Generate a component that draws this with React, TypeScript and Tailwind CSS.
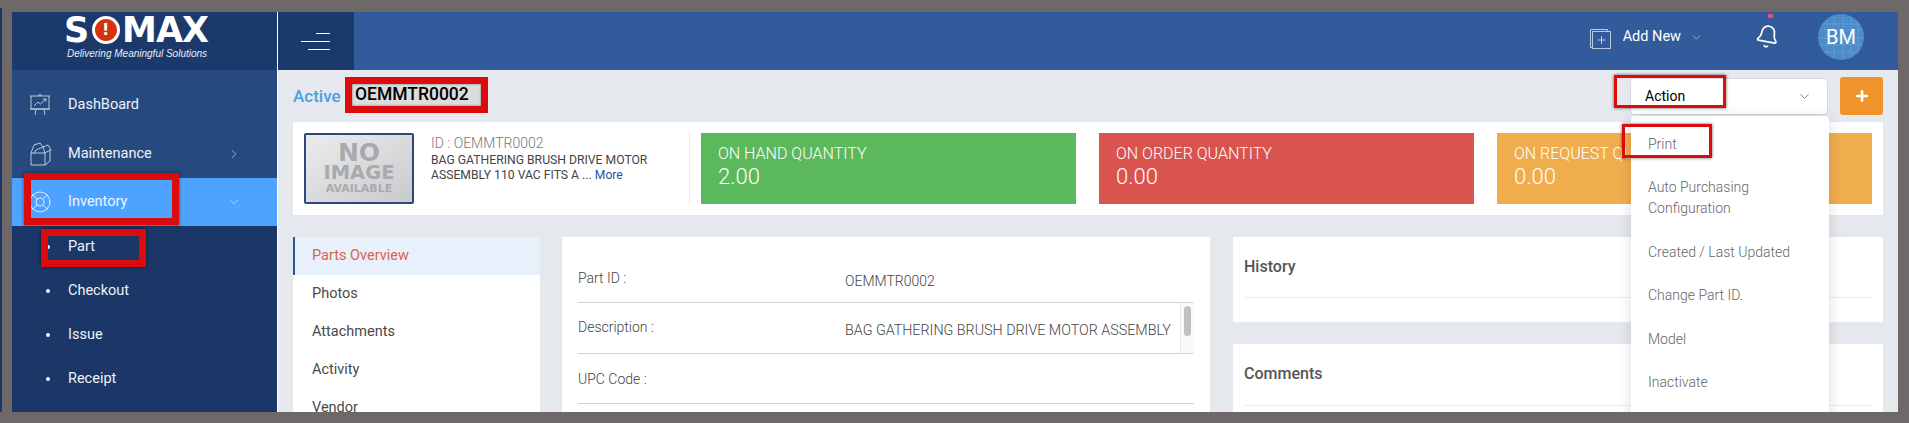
import { Bell, ChevronDown, ChevronRight, LifeBuoy, Plus } from "lucide-react";

const ROBOTO = "font-['Roboto',sans-serif]";

const TABS = ["Parts Overview", "Photos", "Attachments", "Activity", "Vendor"];
const SUB_ITEMS = ["Part", "Checkout", "Issue", "Receipt"];
const MENU = [
  "Print",
  "Auto Purchasing Configuration",
  "Created / Last Updated",
  "Change Part ID.",
  "Model",
  "Inactivate",
];

function Logo() {
  return (
    <div className="h-[58px] bg-[#1b3a6b] pl-[52px] pt-[3px] text-white">
      <div className="flex h-[30px] w-[144px] items-center justify-between font-['DejaVu_Sans',sans-serif] text-[35px] font-bold leading-none">
        <span>S</span>
        <span className="flex h-[28px] w-[28px] shrink-0 items-center justify-center rounded-full border-[3px] border-white bg-[#d5320f] text-[16px]">
          !
        </span>
        <span className="tracking-[-1px]">MAX</span>
      </div>
      <div className="mt-[2px] pl-[3px] font-['Liberation_Sans',sans-serif] text-[10px] italic leading-[14px] text-[#e8edf5]">
        Delivering Meaningful Solutions
      </div>
    </div>
  );
}

function DashboardIcon() {
  return (
    <svg width="24" height="24" viewBox="0 0 24 24" fill="none" stroke="#c9d6e6" strokeWidth="0.9">
      <path d="M2 3H22M3 3V16H21V3M2 16H22" />
      <path d="M6 13L10 9L12.500 11L18 6M15 6H18V8.500" />
      <path d="M8 16L7 22M16 16L17 22M11 1V3M13 1V3" />
    </svg>
  );
}

function BoxIcon() {
  return (
    <svg width="24" height="24" viewBox="0 0 24 24" fill="none" stroke="#c9d6e6" strokeWidth="0.9">
      <path d="M3 11V23H17V11H3ZM17 11L22 8V19L17 23" />
      <path d="M3 11L6 3L12 1L15 5L8 8L6 11M15 5L20 3L23 8L22 8M15 5L17 11" />
    </svg>
  );
}

function Sidebar() {
  return (
    <div className={`flex w-[266px] shrink-0 flex-col border-r border-white bg-[#1a3767] ${ROBOTO}`}>
      <Logo />
      <div className="h-[108px] bg-[#264a7e] pt-[10px] text-[14.500px] text-[#edf2f8]">
        <div className="flex h-[49px] items-center pl-[16px]">
          <DashboardIcon />
          <span className="ml-[16px]">DashBoard</span>
        </div>
        <div className="flex h-[49px] items-center pl-[16px] pr-[36px]">
          <BoxIcon />
          <span className="ml-[16px] flex-1">Maintenance</span>
          <ChevronRight size={14} strokeWidth={1.2} className="text-[#c9d6e6]" />
        </div>
      </div>
      <div className="flex h-[48px] items-center bg-[#4da3ff] pl-[16px] pr-[36px] text-[14.500px] text-[#edf5ff]">
        <LifeBuoy size={24} strokeWidth={1} className="text-[#d8e9ff]" />
        <span className="ml-[16px] flex-1">Inventory</span>
        <ChevronDown size={14} strokeWidth={1.2} className="text-[#d8e9ff]" />
      </div>
      <div className="-mt-[1px] text-[14.500px] text-[#edf2f8]">
        {SUB_ITEMS.map((item) => (
          <div key={item} className="flex h-[44px] items-center pl-[34px]">
            <span className="h-[4px] w-[4px] rounded-full bg-white" />
            <span className="ml-[18px]">{item}</span>
          </div>
        ))}
      </div>
    </div>
  );
}

function Avatar() {
  return (
    <div className="relative flex h-[46px] w-[46px] items-center justify-center overflow-hidden rounded-full bg-[#4b8bca] text-[20px] text-white">
      <svg className="absolute inset-0" width="46" height="46" viewBox="0 0 46 46">
        <path
          d="M2 10H44M0 16H46M0 24H46M0 31H46M3 38H43M9 3V43M16 0V46M25 0V46M33 0V46M40 4V42"
          stroke="#7fb0e0"
          strokeWidth="0.6"
          strokeDasharray="2 1"
          fill="none"
        />
      </svg>
      <span className="relative">BM</span>
    </div>
  );
}

function Header() {
  return (
    <div className="flex h-[58px] shrink-0 bg-[#315b9b] text-white">
      <div className="flex w-[76px] flex-col items-end justify-center gap-[7px] bg-[#1b3a6b] pr-[24px]">
        <span className="h-px w-[14px] bg-white" />
        <span className="h-px w-[29px] bg-white" />
        <span className="h-px w-[22px] bg-white" />
      </div>
      <div className="flex flex-1 items-center justify-end pb-[8px] pr-[34px]">
        <svg width="22" height="21" viewBox="0 0 22 21" fill="none" stroke="#b9cae2" strokeWidth="1" className="mt-[2px]">
          <path d="M3 19.5H1.5V1.5H18.5V3" />
          <rect x="3.5" y="3.5" width="18" height="17" />
          <path d="M12.5 8V16M8.500 12H16.500" />
        </svg>
        <span className="ml-[12px] text-[14.500px] leading-none">Add New</span>
        <ChevronDown size={13} strokeWidth={1.2} className="ml-[9px] text-[#d3dded]" />
        <div className="relative ml-[54px] mr-[39px] h-[46px] w-[22px]">
          <span className="absolute left-[11px] top-[0px] h-[4px] w-[5px] rounded-[1px] bg-[#ef4f6e]" />
          <Bell size={25} strokeWidth={1.6} className="absolute left-[-2px] top-[10px] rotate-[10deg]" />
        </div>
        <Avatar />
      </div>
    </div>
  );
}

function StatCard({ label, value, color }: { label: string; value: string; color: string }) {
  return (
    <div className={`h-[71px] w-[375px] pl-[17px] pt-[11px] font-light text-white ${color}`}>
      <div className="text-[16px] leading-[20px]">{label}</div>
      <div className="text-[22px] leading-[26px]">{value}</div>
    </div>
  );
}

function SummaryCard() {
  return (
    <div className="flex h-[93px] items-center bg-white pl-[11px]">
      <div className="flex h-[71px] w-[110px] shrink-0 flex-col items-center justify-center rounded-[2px] border-2 border-[#2b4a7a] bg-gradient-to-br from-[#ececee] to-[#c9cacc] font-['DejaVu_Sans',sans-serif] font-bold leading-none text-[#a9aaad]">
        <span className="text-[25px] leading-[21px]">NO</span>
        <span className="text-[19.500px] leading-[19px]">IMAGE</span>
        <span className="text-[11px] leading-[13px]">AVAILABLE</span>
      </div>
      <div className="ml-[17px] w-[258px] shrink-0 self-start pt-[13px]">
        <div className="text-[14px] font-light leading-[16px] text-[#777]">ID : OEMMTR0002</div>
        <div className="mt-[2px] text-[12.200px] leading-[15px] text-[#444]">
          BAG GATHERING BRUSH DRIVE MOTOR ASSEMBLY 110 VAC FITS A ...{" "}
          <span className="text-[#2b5597]">More</span>
        </div>
      </div>
      <div className="h-[71px] w-px shrink-0 bg-[#eceef0]" />
      <div className="ml-[11px] flex gap-[23px]">
        <StatCard label="ON HAND QUANTITY" value="2.00" color="bg-[#5cb85c]" />
        <StatCard label="ON ORDER QUANTITY" value="0.00" color="bg-[#d9534f]" />
        <StatCard label="ON REQUEST QUANTITY" value="0.00" color="bg-[#f0ad4e]" />
      </div>
    </div>
  );
}

function Tabs() {
  return (
    <div className="h-[175px] w-[247px] shrink-0 overflow-hidden bg-white text-[14.500px] text-[#4a4a4a]">
      {TABS.map((tab, i) => (
        <div
          key={tab}
          className={
            i === 0
              ? "flex h-[38px] items-center border-l-2 border-[#2b5597] bg-[#e8f0fb] pl-[17px] text-[#d9644f]"
              : "flex h-[38px] items-center pl-[19px]"
          }
        >
          {tab}
        </div>
      ))}
    </div>
  );
}

function PartDetails() {
  return (
    <div className="h-[190px] w-[648px] shrink-0 bg-white px-[16px] pt-[23px] text-[14px] font-light text-[#444]">
      <div className="flex h-[43px] border-b border-[#d4d4d4]">
        <span className="w-[267px] pt-[8px]">Part ID :</span>
        <span className="pt-[11px]">OEMMTR0002</span>
      </div>
      <div className="flex h-[51px] border-b border-[#d4d4d4]">
        <span className="w-[267px] pt-[14px]">Description :</span>
        <span className="flex-1 whitespace-nowrap pt-[17px] text-[14.300px]">BAG GATHERING BRUSH DRIVE MOTOR ASSEMBLY</span>
        <div className="w-[14px] border-l border-[#e8e8e8] bg-[#fafafa] pl-[3px] pt-[3px]">
          <div className="h-[30px] w-[7px] rounded-[4px] bg-[#c1c1c1]" />
        </div>
      </div>
      <div className="h-[50px] border-b border-[#d4d4d4] pt-[15px]">UPC Code :</div>
    </div>
  );
}

function SideCard({ title, height, lineTop }: { title: string; height: string; lineTop: string }) {
  return (
    <div className={`bg-white px-[11px] ${height}`}>
      <div className={`border-b border-[#ececec] text-[16px] font-medium text-[#555] ${lineTop}`}>{title}</div>
    </div>
  );
}

function ActionMenu() {
  return (
    <div className="absolute left-[1353px] top-[46px] h-[330px] w-[198px] rounded-t-[4px] bg-white pl-[17px] pt-[18px] text-[14px] font-light text-[#666] shadow-[0_2px_14px_rgba(0,0,0,0.14)]">
      {MENU.map((item) => (
        <div key={item} className="mb-[22.400px] w-[150px] leading-[21px] last:mb-0">
          {item}
        </div>
      ))}
    </div>
  );
}

function Content() {
  return (
    <div className="relative flex-1 overflow-hidden bg-[#e5e8ec] px-[15px]">
      <div className="flex h-[52px] items-center">
        <span className="text-[17px] font-medium leading-none text-[#4a9fe0]">Active</span>
        <div className="ml-auto flex items-center gap-[12px]">
          <div className="flex h-[37px] w-[198px] items-center justify-between rounded-[4px] border border-[#d5d8dc] bg-white pl-[14px] pr-[15px] text-[14px] text-black">
            Action
            <ChevronDown size={15} strokeWidth={1.2} className="text-[#555]" />
          </div>
          <div className="flex h-[38px] w-[43px] items-center justify-center rounded-[3px] bg-[#f0932b]">
            <Plus size={16} strokeWidth={4} className="text-white" />
          </div>
        </div>
      </div>
      <SummaryCard />
      <div className="mt-[22px] flex gap-[22px]">
        <Tabs />
        <PartDetails />
        <div className="ml-px flex w-[650px] flex-col gap-[22px]">
          <SideCard title="History" height="h-[85px]" lineTop="h-[61px] pt-[18px]" />
          <SideCard title="Comments" height="h-[85px]" lineTop="h-[62px] pt-[18px]" />
        </div>
      </div>
      <ActionMenu />
    </div>
  );
}

function RedBox({ className }: { className: string }) {
  return <div className={`absolute border-[#dc0c0c] shadow-[0_0_3px_rgba(0,0,0,0.6)] ${className}`} />;
}

export default function App() {
  return (
    <div className={`relative flex h-[423px] w-[1909px] overflow-hidden bg-[#6f6868] pb-[11px] pl-[2px] pr-[11px] pt-[12px] ${ROBOTO}`}>
      {/* sliver of the page left of the frame */}
      <div className="absolute left-0 top-[8px] h-[404px] w-[2px] bg-[#1a3767]" />
      <div className="ml-[10px] flex min-w-0 flex-1">
        <Sidebar />
        <div className="flex min-w-0 flex-1 flex-col">
          <Header />
          <Content />
        </div>
      </div>

      {/* annotations drawn over the screenshot */}
      <div className="absolute left-[345px] top-[77px] flex h-[36px] w-[143px] items-center border-[7px] border-[#dc0c0c] bg-[#dcdcdc] pl-[3px] text-[17.500px] font-medium leading-none text-black shadow-[inset_0_0_2px_rgba(0,0,0,0.6)]">
        OEMMTR0002
      </div>
      <RedBox className="left-[24px] top-[173px] h-[52px] w-[155px] border-[7px]" />
      <RedBox className="left-[41px] top-[229px] h-[38px] w-[105px] border-[7px]" />
      <RedBox className="left-[1614px] top-[75px] h-[33px] w-[112px] border-[3px]" />
      <RedBox className="left-[1622px] top-[124px] h-[34px] w-[90px] border-[3px]" />
    </div>
  );
}
